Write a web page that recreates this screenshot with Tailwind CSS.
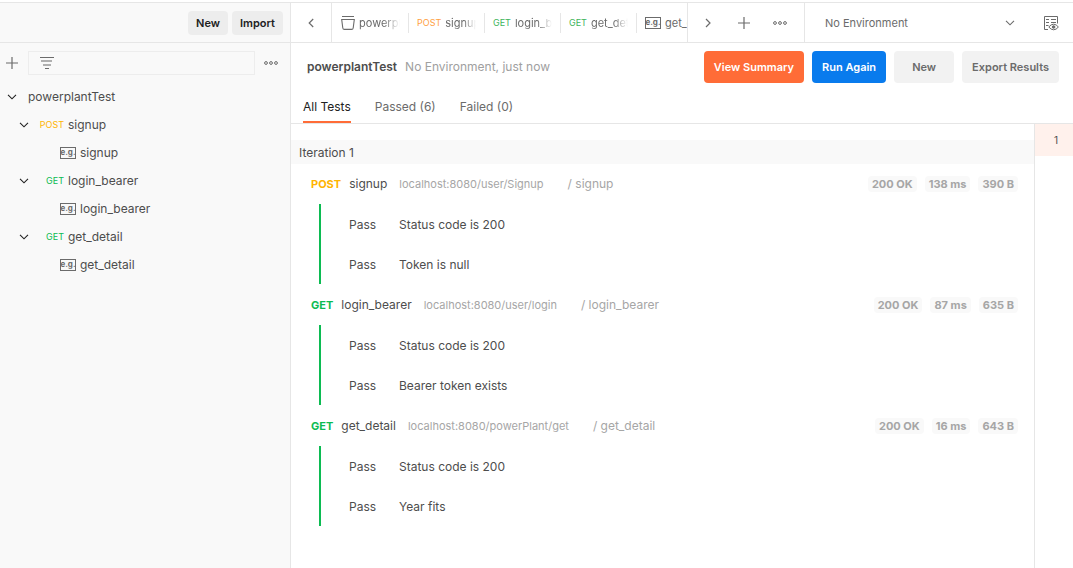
<!DOCTYPE html>
<html lang="en">
<head>
<meta charset="utf-8">
<meta name="viewport" content="width=device-width, initial-scale=1">
<title>powerplantTest - Runner</title>
<script src="https://cdn.jsdelivr.net/npm/@tailwindcss/browser@4"></script>
</head>
<body class="flex min-h-screen flex-col bg-white pt-0.5 font-['Inter',sans-serif] text-xs text-[#4d4d4d]">
<svg class="hidden">
  <symbol id="down" viewBox="0 0 10 6"><path d="M1 .8 5 4.8 9 .8" fill="none" stroke="currentColor" stroke-width="1.1"/></symbol>
  <symbol id="plus" viewBox="0 0 12 12"><path d="M6 0V12M0 6H12" fill="none" stroke="currentColor" stroke-width="1.2"/></symbol>
  <symbol id="dots" viewBox="0 0 14 4"><g fill="none" stroke="currentColor"><circle cx="2" cy="2" r="1.4"/><circle cx="7" cy="2" r="1.4"/><circle cx="12" cy="2" r="1.4"/></g></symbol>
  <symbol id="example" viewBox="0 0 16 12"><rect x=".5" y=".5" width="15" height="11" fill="none" stroke="currentColor"/><text x="8" y="8" text-anchor="middle" font-size="8" font-weight="700" fill="currentColor">e.g.</text></symbol>
</svg>
<div class="flex grow border-t border-[#e6e6e6]">
  <aside class="flex w-[291px] shrink-0 flex-col border-r border-[#e6e6e6] bg-[#f9f9f9]">
    <div class="flex h-10 items-center justify-end gap-1 border-b border-[#e6e6e6] pr-[7px]">
      <button class="h-6 rounded bg-[#ededed] px-2 pt-px text-[11px] font-semibold text-[#212121]">New</button>
      <button class="h-6 rounded bg-[#ededed] px-2 pt-px text-[11px] font-semibold text-[#212121]">Import</button>
    </div>
    <div class="flex items-center pt-2 pr-3 pb-2 pl-1.5">
      <button aria-label="Create" class="text-[#6b6b6b]"><svg class="h-3 w-3"><use href="#plus"/></svg></button>
      <label class="ml-2.5 flex h-6 grow items-center border border-[#ededed] pl-[11px]">
        <svg class="h-3 w-3.5 shrink-0" viewBox="0 0 14 12"><g fill="none" stroke-width="1"><path d="M0 .5H14M5 11.5H9" stroke="#6b6b6b"/><path d="M1 4H12M3 8H11" stroke="#b0b0b0" stroke-width="2"/></g></svg>
        <input aria-label="Filter collections" class="h-5 w-0 grow bg-transparent px-2 outline-none">
      </label>
      <button aria-label="More options" class="ml-[9px] text-[#6b6b6b]"><svg class="h-1 w-3.5"><use href="#dots"/></svg></button>
    </div>
    <ul class="[&>li]:flex [&>li]:h-7 [&>li]:items-center">
      <li class="pl-[7px]"><button aria-label="Collapse powerplantTest"><svg class="h-1.5 w-2.5 text-[#212121]"><use href="#down"/></svg></button><a href="#" class="ml-[11px]">powerplantTest</a></li>
      <li class="pl-[19px]"><button aria-label="Collapse signup"><svg class="h-1.5 w-2.5 text-[#212121]"><use href="#down"/></svg></button><span class="w-[35px] text-right text-[9px] text-[#ffb400]">POST</span><a href="#" class="ml-1">signup</a></li>
      <li class="gap-1 pl-[60px]"><svg class="h-3 w-4 text-[#6b6b6b]"><use href="#example"/></svg><a href="#">signup</a></li>
      <li class="pl-[19px]"><button aria-label="Collapse login_bearer"><svg class="h-1.5 w-2.5 text-[#212121]"><use href="#down"/></svg></button><span class="w-[35px] text-right text-[9px] text-[#0cbb52]">GET</span><a href="#" class="ml-1">login_bearer</a></li>
      <li class="gap-1 pl-[60px]"><svg class="h-3 w-4 text-[#6b6b6b]"><use href="#example"/></svg><a href="#">login_bearer</a></li>
      <li class="pl-[19px]"><button aria-label="Collapse get_detail"><svg class="h-1.5 w-2.5 text-[#212121]"><use href="#down"/></svg></button><span class="w-[35px] text-right text-[9px] text-[#0cbb52]">GET</span><a href="#" class="ml-1">get_detail</a></li>
      <li class="gap-1 pl-[60px]"><svg class="h-3 w-4 text-[#6b6b6b]"><use href="#example"/></svg><a href="#">get_detail</a></li>
    </ul>
  </aside>

  <div class="flex min-w-0 grow flex-col">
    <div class="flex h-10 shrink-0 border-b border-[#e6e6e6] text-[11px] text-[#6b6b6b]">
      <button aria-label="Scroll tabs left" class="flex w-[41px] shrink-0 items-center justify-center border-r border-[#e6e6e6]"><svg class="h-2.5 w-1.5" viewBox="0 0 6 10"><path d="M5.2 1 1.2 5 5.2 9" fill="none" stroke="currentColor" stroke-width="1.2"/></svg></button>
      <nav class="flex w-0 grow items-center overflow-hidden">
        <a href="#" class="flex h-5 w-[77px] shrink-0 items-center gap-1 border-r border-[#e6e6e6] pr-2 pl-[9px]"><svg class="h-3.5 w-3.5 shrink-0" viewBox="0 0 14 14"><path d="M1 .5H13M.7 3.5H13.3L12.2 12Q12 13.4 10.6 13.4H3.4Q2 13.4 1.8 12Z" fill="none" stroke="currentColor" stroke-width="1.1"/></svg><span class="w-0 grow overflow-hidden pt-0.5 [mask-image:linear-gradient(to_right,black_60%,transparent)]">powerplantTest</span></a>
        <a href="#" class="flex h-5 w-[76px] shrink-0 items-center gap-1 border-r border-[#e6e6e6] pr-2 pl-2"><span class="text-[9px] text-[#ff9f43]">POST</span><span class="w-0 grow overflow-hidden pt-0.5 [mask-image:linear-gradient(to_right,black_60%,transparent)]">signup</span></a>
        <a href="#" class="flex h-5 w-[76px] shrink-0 items-center gap-1 border-r border-[#e6e6e6] pr-2 pl-2"><span class="text-[9px] text-[#3db45c]">GET</span><span class="w-0 grow overflow-hidden pt-0.5 [mask-image:linear-gradient(to_right,black_60%,transparent)]">login_bearer</span></a>
        <a href="#" class="flex h-5 w-[76px] shrink-0 items-center gap-1 border-r border-[#e6e6e6] pr-2 pl-2"><span class="text-[9px] text-[#3db45c]">GET</span><span class="w-0 grow overflow-hidden pt-0.5 [mask-image:linear-gradient(to_right,black_60%,transparent)]">get_detail</span></a>
        <a href="#" class="flex h-5 shrink-0 items-center gap-1 pl-2"><svg class="h-3 w-4"><use href="#example"/></svg><span class="pt-0.5">get_detail</span></a>
      </nav>
      <div class="flex w-[118px] shrink-0 items-center border-x border-[#e6e6e6] pl-[17px]">
        <button aria-label="Scroll tabs right"><svg class="h-2.5 w-1.5" viewBox="0 0 6 10"><path d="M1 1 5 5 1 9" fill="none" stroke="currentColor" stroke-width="1.2"/></svg></button>
        <button aria-label="New tab" class="ml-[27px]"><svg class="h-3 w-3"><use href="#plus"/></svg></button>
        <button aria-label="Tab options" class="ml-[23px]"><svg class="h-1 w-3.5"><use href="#dots"/></svg></button>
      </div>
      <div class="relative flex w-[238px] shrink-0 items-center">
        <select aria-label="Environment" class="h-8 w-full appearance-none bg-transparent pt-0.5 pl-5 outline-none"><option>No Environment</option></select>
        <svg class="pointer-events-none absolute right-[28px] h-1.5 w-2.5"><use href="#down"/></svg>
      </div>
      <button aria-label="Environment quick look" class="flex shrink-0 items-center pr-3.5"><svg class="h-4 w-4" viewBox="0 0 16 16" fill="none" stroke="currentColor"><path d="M5 14.5H1.5V1.5H14.5V8.5M3 4.5H6M8 4.5H13M3 7.5H6M8 7.5H13M3 10.5H5.500"/><path d="M5.800 12Q8 9.200 10.600 9.200T15.400 12Q13.200 14.800 10.600 14.800T5.800 12Z"/><circle cx="10.600" cy="12" r="1.300" fill="currentColor"/></svg></button>
    </div>

    <div class="flex items-center gap-2 pt-2 pr-3.5 pl-4">
      <h1 class="text-xs font-semibold text-[#4d4d4d]">powerplantTest</h1>
      <span class="grow text-xs text-[#a0a0a0]">No Environment, just now</span>
      <button class="h-8 rounded bg-[#ff6c37] px-2.5 text-[11px] font-semibold text-white">View Summary</button>
      <button class="h-8 rounded bg-[#097bed] px-2.5 text-[11px] font-semibold text-white">Run Again</button>
      <button class="h-8 w-[60px] rounded bg-[#f2f2f2] text-[11px] font-semibold text-[#6b6b6b]">New</button>
      <button class="h-8 rounded bg-[#f2f2f2] px-2.5 text-[11px] font-semibold text-[#6b6b6b]">Export Results</button>
    </div>
    <div class="mt-2 flex h-[33px] shrink-0 items-stretch gap-6 border-b border-[#e6e6e6] pl-3 text-[#6b6b6b]">
      <button class="border-b-2 border-[#ff6c37] pt-0.5 text-[#212121]">All Tests</button>
      <button class="border-b-2 border-transparent pt-0.5">Passed (6)</button>
      <button class="border-b-2 border-transparent pt-0.5">Failed (0)</button>
    </div>

    <div class="flex grow">
      <main class="min-w-0 grow pt-4">
        <h2 class="flex h-6 items-center bg-[#f9f9f9] pt-0.5 pl-2 text-xs">Iteration 1</h2>
        <section class="mb-px">
          <div class="flex h-10 items-center pr-4 pl-5">
            <span class="text-[11px] font-bold text-[#ffb400]">POST</span><span class="ml-2">signup</span><span class="ml-3 text-[11px] text-[#a6a6a6]">localhost:8080/user/Signup</span><span class="ml-6 grow text-[#a6a6a6]">/ signup</span>
            <div class="flex gap-2 text-[11px] leading-4 font-bold text-[#a6a6a6]"><span class="rounded bg-[#f9f9f9] px-1">200 OK</span><span class="rounded bg-[#f9f9f9] px-1">138 ms</span><span class="rounded bg-[#f9f9f9] px-1">390 B</span></div>
          </div>
          <ul class="ml-7 border-l-2 border-[#0cbb52] pl-7">
            <li class="flex h-10 items-center pt-0.5"><span class="w-[50px]">Pass</span><span>Status code is 200</span></li>
            <li class="flex h-10 items-center pt-0.5"><span class="w-[50px]">Pass</span><span>Token is null</span></li>
          </ul>
        </section>
        <section class="mb-px">
          <div class="flex h-10 items-center pr-4 pl-5">
            <span class="text-[11px] font-bold text-[#0cbb52]">GET</span><span class="ml-2">login_bearer</span><span class="ml-3 text-[11px] text-[#a6a6a6]">localhost:8080/user/login</span><span class="ml-6 grow text-[#a6a6a6]">/ login_bearer</span>
            <div class="flex gap-2 text-[11px] leading-4 font-bold text-[#a6a6a6]"><span class="rounded bg-[#f9f9f9] px-1">200 OK</span><span class="rounded bg-[#f9f9f9] px-1">87 ms</span><span class="rounded bg-[#f9f9f9] px-1">635 B</span></div>
          </div>
          <ul class="ml-7 border-l-2 border-[#0cbb52] pl-7">
            <li class="flex h-10 items-center pt-0.5"><span class="w-[50px]">Pass</span><span>Status code is 200</span></li>
            <li class="flex h-10 items-center pt-0.5"><span class="w-[50px]">Pass</span><span>Bearer token exists</span></li>
          </ul>
        </section>
        <section>
          <div class="flex h-10 items-center pr-4 pl-5">
            <span class="text-[11px] font-bold text-[#0cbb52]">GET</span><span class="ml-2">get_detail</span><span class="ml-3 text-[11px] text-[#a6a6a6]">localhost:8080/powerPlant/get</span><span class="ml-6 grow text-[#a6a6a6]">/ get_detail</span>
            <div class="flex gap-2 text-[11px] leading-4 font-bold text-[#a6a6a6]"><span class="rounded bg-[#f9f9f9] px-1">200 OK</span><span class="rounded bg-[#f9f9f9] px-1">16 ms</span><span class="rounded bg-[#f9f9f9] px-1">643 B</span></div>
          </div>
          <ul class="ml-7 border-l-2 border-[#0cbb52] pl-7">
            <li class="flex h-10 items-center pt-0.5"><span class="w-[50px]">Pass</span><span>Status code is 200</span></li>
            <li class="flex h-10 items-center pt-0.5"><span class="w-[50px]">Pass</span><span>Year fits</span></li>
          </ul>
        </section>
      </main>
      <div class="w-[39px] shrink-0 border-l border-[#e6e6e6]"><button class="h-8 w-full bg-[#fff1ec] pt-0.5 pl-1 text-[10px] text-[#4d4d4d]">1</button></div>
    </div>
  </div>
</div>
</body>
</html>
